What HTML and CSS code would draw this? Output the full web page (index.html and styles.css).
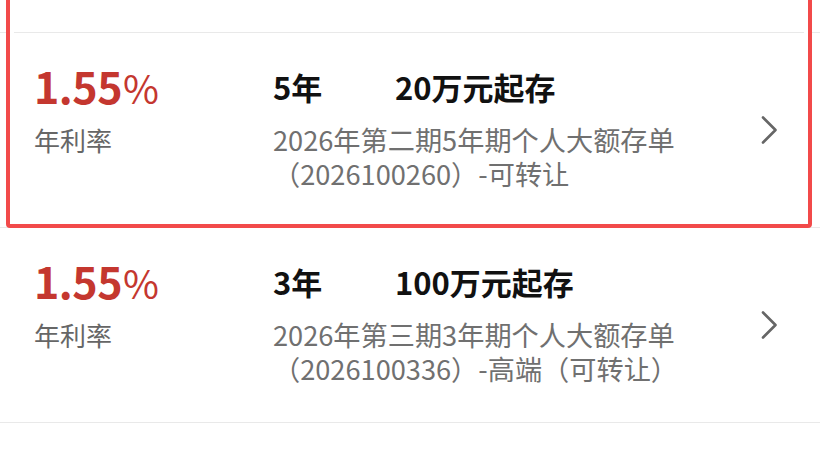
FILE: index.html
```html
<!DOCTYPE html>
<html lang="zh-CN">
<head>
<meta charset="utf-8">
<title>大额存单</title>
<link rel="stylesheet" href="styles.css">
</head>
<body>
<div class="list">
  <div class="item item-prev"></div>
  <div class="item item-selected">
    <div class="rate">
      <div class="rate-value"><span class="num">1.55</span><span class="pct">%</span></div>
      <div class="rate-label">年利率</div>
    </div>
    <div class="info">
      <div class="title"><span class="term">5年</span><span class="amount">20万元起存</span></div>
      <div class="desc">2026年第二期5年期个人大额存单（2026100260）-可转让</div>
    </div>
    <div class="chev">
      <svg width="16" height="28" viewBox="0 0 16 28"><polyline points="2,1.5 14.5,14 2,26.5" fill="none" stroke="#666666" stroke-width="2.6" stroke-linecap="round" stroke-linejoin="round"/></svg>
    </div>
    <div class="highlight"></div>
  </div>
  <div class="item">
    <div class="rate">
      <div class="rate-value"><span class="num">1.55</span><span class="pct">%</span></div>
      <div class="rate-label">年利率</div>
    </div>
    <div class="info">
      <div class="title"><span class="term">3年</span><span class="amount">100万元起存</span></div>
      <div class="desc">2026年第三期3年期个人大额存单（2026100336）-高端（可转让）</div>
    </div>
    <div class="chev">
      <svg width="16" height="28" viewBox="0 0 16 28"><polyline points="2,1.5 14.5,14 2,26.5" fill="none" stroke="#666666" stroke-width="2.6" stroke-linecap="round" stroke-linejoin="round"/></svg>
    </div>
  </div>
  <div class="item item-next"></div>
</div>
</body>
</html>
```
FILE: styles.css
```css
html, body {
  margin: 0;
  padding: 0;
  background: #ffffff;
}
body {
  width: 820px;
  height: 460px;
  overflow: hidden;
  font-family: "Noto Sans CJK SC", "Noto Sans", sans-serif;
}
.list {
  display: flex;
  flex-direction: column;
}
.item {
  position: relative;
  display: flex;
  align-items: flex-start;
  height: 194px;
  padding-left: 34px;
  border-bottom: 1px solid #e9e9e9;
  flex-shrink: 0;
}
.item-prev {
  height: 32px;
}
.item-next {
  height: 60px;
  border-bottom: none;
}
.rate {
  width: 239px;
  flex-shrink: 0;
  margin-top: 30px;
}
.rate-value {
  color: #c4372f;
  font-size: 43px;
  line-height: 44px;
  height: 44px;
  white-space: nowrap;
}
.rate-value .num {
  font-weight: 700;
  letter-spacing: -0.5px;
}
.rate-value .pct {
  font-weight: 400;
  font-size: 39px;
  margin-left: 1px;
}
.rate-label {
  margin-top: 20px;
  color: #666666;
  font-size: 26px;
  line-height: 26px;
}
.info {
  width: 420px;
  flex-shrink: 0;
  margin-top: 39px;
}
.title {
  display: flex;
  color: #111111;
  font-size: 31px;
  line-height: 30px;
  font-weight: 700;
  white-space: nowrap;
}
.term {
  width: 122px;
}
.desc {
  margin-top: 20px;
  color: #707070;
  font-size: 27.2px;
  line-height: 34px;
}
.chev {
  align-self: center;
  margin-left: auto;
  margin-right: 43px;
  display: flex;
}
.highlight {
  position: absolute;
  left: 6px;
  right: 8px;
  top: -230px;
  bottom: -1px;
  border: 4.5px solid #f24a4a;
  border-radius: 4px;
  box-shadow: inset 0 0 0 4px #ffffff;
  pointer-events: none;
}
```
